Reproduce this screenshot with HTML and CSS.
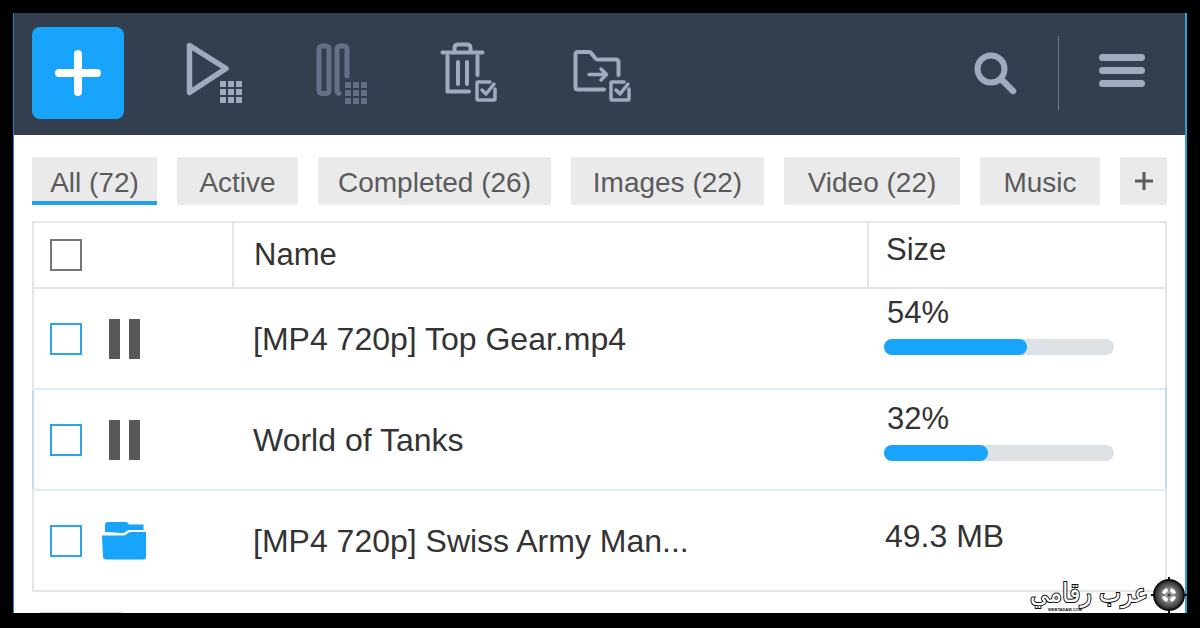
FILE: index.html
```
<!DOCTYPE html>
<html lang="en">
<head>
    <meta charset="UTF-8">
    <meta name="viewport" content="width=device-width, initial-scale=1.0">
    <title>Downloads</title>
    <link rel="stylesheet" href="styles.css">
</head>
<body>
    <div class="window">
        <header class="toolbar">
            <button class="add-btn" aria-label="Add download">
                <svg width="48" height="48" viewBox="0 0 48 48"><path d="M24 5V43M5 24H43"/></svg>
            </button>
            <div class="actions">
                <button class="icon-btn" aria-label="Start all">
                    <svg width="58" height="62" viewBox="0 0 58 62">
                        <path d="M3.5 3.5L40 26.5L3.5 50.5Z" stroke-width="5.5"/>
                        <path class="dots" d="M34 39h6v6h-6zM42 39h6v6h-6zM50 39h6v6h-6zM34 47h6v6h-6zM42 47h6v6h-6zM50 47h6v6h-6zM34 55h6v6h-6zM42 55h6v6h-6zM50 55h6v6h-6z"/>
                    </svg>
                </button>
                <button class="icon-btn dimmed" aria-label="Pause all">
                    <svg width="52" height="62" viewBox="0 0 52 62">
                        <rect x="3" y="4" width="10" height="47.5" rx="3"/>
                        <path d="M23 51.5Q21 51 21 48V7.5q0-3.5 3.5-3.5H27.5q3.5 0 3.5 3.5V34"/>
                        <path class="dots" d="M29 40h6v6h-6zM37 40h6v6h-6zM45 40h6v6h-6zM29 48h6v6h-6zM37 48h6v6h-6zM45 48h6v6h-6zM29 56h6v6h-6zM37 56h6v6h-6zM45 56h6v6h-6z"/>
                    </svg>
                </button>
                <button class="icon-btn" aria-label="Delete selected">
                    <svg width="58" height="62" viewBox="0 0 58 62">
                        <path d="M2.5 10.5H42.5M14.5 10V6q0-3.5 3.5-3.5H27q3.5 0 3.5 3.5V10"/>
                        <path d="M7.5 14V49.5H29M37.5 14V33M18 20V42M27 20V42"/>
                        <path d="M50 40H38q-1 0-1 1V57q0 1 1 1H54q1 0 1-1V47M42 48L46 52L54 42" stroke-width="3.5"/>
                    </svg>
                </button>
                <button class="icon-btn" aria-label="Move selected">
                    <svg width="62" height="62" viewBox="0 0 62 62">
                        <path d="M34 47.5H8q-2.5 0-2.5-2.5V12.5q0-2.5 2.5-2.5H19q1.5 0 2.5 1.5L25 16q1 1.500 2.5 1.500H45.5q3 0 3 3V33"/>
                        <path d="M19 32.5H36M31 27L36.5 32.5L31 38" stroke-width="3.5"/>
                        <path d="M54 40H42q-1 0-1 1V57q0 1 1 1H58q1 0 1-1V47M46 48L50 52L58 42" stroke-width="3.5"/>
                    </svg>
                </button>
            </div>
            <div class="tools">
                <button class="icon-btn" aria-label="Search">
                    <svg width="44" height="44" viewBox="0 0 44 44">
                        <circle cx="17" cy="18" r="13.5" stroke-width="6"/>
                        <path d="M28 29L39 40" stroke-width="6.5"/>
                    </svg>
                </button>
                <span class="divider"></span>
                <button class="icon-btn" aria-label="Menu">
                    <svg width="46" height="38" viewBox="0 0 46 38">
                        <path d="M3.5 3.5H42.5M3.5 16.5H42.5M3.5 29.5H42.5" stroke-width="7"/>
                    </svg>
                </button>
            </div>
        </header>

        <nav class="tabs">
            <button class="tab active">All (72)</button>
            <button class="tab">Active</button>
            <button class="tab">Completed (26)</button>
            <button class="tab">Images (22)</button>
            <button class="tab">Video (22)</button>
            <button class="tab">Music</button>
            <button class="tab" aria-label="Add tab">
                <svg width="20" height="22" viewBox="0 0 20 22"><path d="M10 0V18M1 9H19"/></svg>
            </button>
        </nav>

        <table class="downloads">
            <colgroup>
                <col class="col-state">
                <col>
                <col class="col-size">
            </colgroup>
            <thead>
                <tr>
                    <th><div class="state"><input type="checkbox" class="check check-all" aria-label="Select all"></div></th>
                    <th class="name">Name</th>
                    <th class="size">Size</th>
                </tr>
            </thead>
            <tbody>
                <tr>
                    <td>
                        <div class="state">
                            <input type="checkbox" class="check" aria-label="Select Top Gear">
                            <svg class="pause" width="44" height="42" viewBox="0 0 44 42"><path d="M7 1h11v40h-11zM27 1h11v40h-11z"/></svg>
                        </div>
                    </td>
                    <td class="name">[MP4 720p] Top Gear.mp4</td>
                    <td class="size progress-cell">
                        <div class="percent">54%</div>
                        <div class="bar"><div class="bar-fill" style="width: 62%"></div></div>
                    </td>
                </tr>
                <tr class="selected">
                    <td>
                        <div class="state">
                            <input type="checkbox" class="check" aria-label="Select World of Tanks">
                            <svg class="pause" width="44" height="42" viewBox="0 0 44 42"><path d="M7 1h11v40h-11zM27 1h11v40h-11z"/></svg>
                        </div>
                    </td>
                    <td class="name">World of Tanks</td>
                    <td class="size progress-cell">
                        <div class="percent">32%</div>
                        <div class="bar"><div class="bar-fill" style="width: 45%"></div></div>
                    </td>
                </tr>
                <tr>
                    <td>
                        <div class="state">
                            <input type="checkbox" class="check" aria-label="Select Swiss Army Man">
                            <svg class="folder" width="44" height="38" viewBox="0 0 44 38">
                                <path d="M3 10V3Q3 0 6 0H24Q26 0 27 2.5H41.5V8H28Q25 8 24 9.5Q23 11 20 11Z"/>
                                <path d="M0 13.5H21Q24 13.5 25.5 11.5Q26.5 10 29 10H44V34.5Q44 37.5 41 37.5H4Q1 37.5 1 34.5Z"/>
                            </svg>
                        </div>
                    </td>
                    <td class="name">[MP4 720p] Swiss Army Man...</td>
                    <td class="size">49.3 MB</td>
                </tr>
            </tbody>
        </table>
        <div class="status-edge"></div>

        <div class="watermark">
            <svg width="36" height="36" viewBox="0 0 36 36">
                <defs>
                    <radialGradient id="lens">
                        <stop offset="0" stop-color="#aaa"/>
                        <stop offset="0.5" stop-color="#777"/>
                        <stop offset="1" stop-color="#222"/>
                    </radialGradient>
                </defs>
                <path d="M18 0V36M0 18H36" stroke="#111" stroke-width="2"/>
                <circle cx="18" cy="18" r="15" fill="url(#lens)" stroke="#111" stroke-width="2"/>
                <g fill="#fff">
                    <path d="M11 16Q12 12 16 11L17 14L14 17Z"/>
                    <path d="M25 16Q24 12 20 11L19 14L22 17Z"/>
                    <path d="M11 20Q12 24 16 25L17 22L14 19Z"/>
                    <path d="M25 20Q24 24 20 25L19 22L22 19Z"/>
                </g>
                <circle cx="18" cy="18" r="1.5" fill="#333"/>
            </svg>
            <div class="brand">
                <span class="brand-name" lang="ar">عرب رقامي</span>
                <span class="brand-site">WEBTADAM.COM</span>
            </div>
        </div>
    </div>
</body>
</html>
```
FILE: styles.css
```
* {
    box-sizing: border-box;
}

body {
    font-family: "Liberation Sans", Arial, sans-serif;
    background-color: #000;
    color: #333;
    margin: 0;
    padding: 13px 13px 16px;
}

button {
    font: inherit;
    color: inherit;
    border: none;
    padding: 0;
    background: none;
    cursor: pointer;
}

svg {
    display: block;
}

.window {
    position: relative;
    background-color: #fff;
    border-left: 1px solid #1487d8;
    border-right: 2px solid #2aa4cf;
}

/* Toolbar */
.toolbar {
    display: flex;
    align-items: center;
    padding: 14px 18px 16px;
    background-color: #333e4f;
}

.add-btn {
    display: flex;
    align-items: center;
    justify-content: center;
    width: 92px;
    height: 92px;
    border-radius: 8px;
    background-color: #18a4fb;
}

.add-btn svg {
    fill: none;
    stroke: #fff;
    stroke-width: 8;
    stroke-linecap: round;
}

.actions {
    display: flex;
    gap: 72px;
    margin-left: 62px;
}

.icon-btn svg {
    fill: none;
    stroke: #a0abc0;
    stroke-width: 4;
    stroke-linecap: round;
    stroke-linejoin: round;
}

.icon-btn .dots {
    fill: #a0abc0;
    stroke: none;
}

.dimmed svg {
    stroke: #647087;
    stroke-width: 5;
}

.dimmed .dots {
    fill: #647087;
}

.tools {
    display: flex;
    align-items: center;
    gap: 40px;
    margin-left: auto;
    padding-right: 22px;
}

.divider {
    width: 1px;
    height: 74px;
    background-color: #6f7a8b;
}

/* Filter tabs */
.tabs {
    display: grid;
    grid-template-columns: 125fr 121fr 233fr 193fr 176fr 120fr 47fr;
    gap: 20px;
    padding: 22px 18px 16px;
}

.tab {
    display: flex;
    align-items: center;
    justify-content: center;
    height: 48px;
    border-radius: 2px;
    background-color: #eaeaea;
    color: #5a5a5a;
    font-size: 28px;
    line-height: 32px;
    padding-top: 4px;
    white-space: nowrap;
}

.tab.active {
    border-bottom: 4px solid #22a0ea;
    border-radius: 0;
    padding-top: 8px;
}

.tab svg {
    fill: none;
    stroke: #5a5a5a;
    stroke-width: 3;
}

/* Download list */
.downloads {
    width: calc(100% - 36px);
    margin: 0 18px;
    border-collapse: collapse;
    table-layout: fixed;
    border: 2px solid #e4e5e7;
    font-size: 32px;
    line-height: 36px;
}

.col-state {
    width: 200px;
}

.col-size {
    width: 298px;
}

.downloads th {
    height: 66px;
    padding: 0;
    border-left: 2px solid #e4e5e7;
    border-bottom: 2px solid #e4e5e7;
    font-size: 31px;
    font-weight: normal;
    text-align: left;
}

.downloads td {
    height: 101px;
    padding: 0;
}

.downloads .name {
    padding-left: 20px;
    white-space: nowrap;
}

.downloads .size {
    padding-left: 17px;
    padding-bottom: 10px;
}

.selected td {
    border-top: 2px solid #d9edfb;
    border-bottom: 2px solid #d9edfb;
}

.selected td:first-child {
    border-left: 2px solid #c3dcf0;
}

.selected td:last-child {
    border-right: 2px solid #c3dcf0;
}

.state {
    display: flex;
    align-items: center;
    gap: 20px;
    padding-left: 16px;
}

.check {
    appearance: none;
    width: 32px;
    height: 32px;
    margin: 0;
    border: 2px solid #2ba3f0;
    background-color: #fff;
}

.check-all {
    border-color: #757575;
}

.pause {
    fill: #585858;
}

.folder {
    fill: #18a4fb;
}

.downloads .progress-cell {
    padding: 6px 51px 0 16px;
    vertical-align: top;
}

.downloads .selected .progress-cell {
    padding-top: 11px;
}

.percent {
    padding-left: 3px;
    font-size: 31px;
}

.bar {
    height: 16px;
    margin-top: 8px;
    border-radius: 8px;
    background-color: #dce1e6;
}

.bar-fill {
    height: 100%;
    border-radius: 8px;
    background-color: #18a4fb;
}

.status-edge {
    width: 82px;
    height: 1px;
    margin: 20px 26px 0;
    background-color: #d5d5d5;
}

/* Watermark over the lower right corner */
.watermark {
    position: absolute;
    right: -2px;
    bottom: 0;
    display: flex;
    flex-direction: row-reverse;
    align-items: center;
    gap: 3px;
}

.brand {
    display: flex;
    flex-direction: column;
}

.brand-name {
    direction: rtl;
    font-family: "DejaVu Sans Condensed", "DejaVu Sans", sans-serif;
    font-size: 26px;
    line-height: 30px;
    color: #fff;
    -webkit-text-stroke: 2px #111;
    paint-order: stroke fill;
}

.brand-site {
    margin-left: 18px;
    font-size: 4px;
    font-weight: bold;
    line-height: 4px;
    color: #111;
}
```
